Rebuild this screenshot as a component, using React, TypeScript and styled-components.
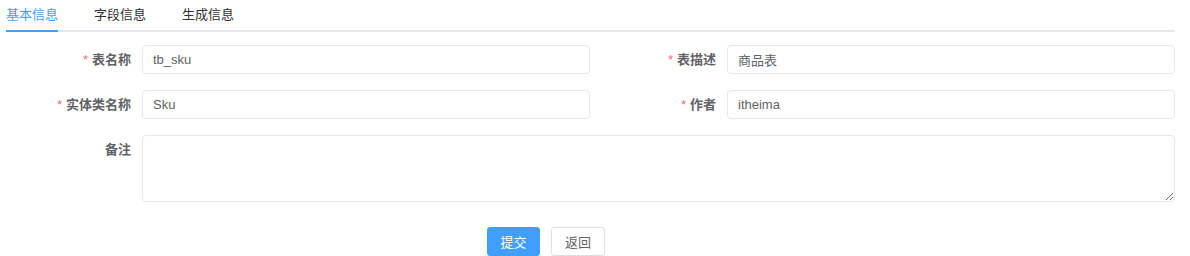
import React, { useState } from "react";
import styled, { createGlobalStyle } from "styled-components";

const GlobalStyle = createGlobalStyle`
  html, body {
    margin: 0;
    padding: 0;
    background: #fff;
  }
  body {
    font-family: "Helvetica Neue", "Liberation Sans", "Noto Sans CJK SC", sans-serif;
    color: #606266;
  }
`;

const Page = styled.div`
  width: 1190px;
  height: 256px;
  overflow: hidden;
  padding: 0 15px 0 6px;
  box-sizing: border-box;
`;

const TabNav = styled.div`
  display: flex;
  height: 32px;
  border-bottom: 2px solid #e4e7ed;
  box-sizing: border-box;
`;

const Tab = styled.div<{ $active?: boolean; $first?: boolean }>`
  position: relative;
  padding: ${(p) => (p.$first ? "0 18px 0 0" : "0 18px")};
  font-size: 13px;
  line-height: 30px;
  color: ${(p) => (p.$active ? "#409eff" : "#303133")};
  cursor: pointer;
  &::after {
    content: "";
    display: ${(p) => (p.$active ? "block" : "none")};
    position: absolute;
    left: ${(p) => (p.$first ? "0" : "18px")};
    right: 18px;
    bottom: -2px;
    height: 2px;
    background: #409eff;
  }
`;

const Form = styled.div`
  padding-top: 13px;
`;

const Grid = styled.div`
  display: grid;
  grid-template-columns: 1fr 1fr;
  column-gap: 1px;
`;

const Item = styled.div<{ $span?: number }>`
  display: flex;
  align-items: flex-start;
  margin-bottom: ${(p) => (p.$span === 2 ? "25px" : "16px")};
  grid-column: ${(p) => (p.$span === 2 ? "1 / span 2" : "auto")};
`;

const Label = styled.label`
  width: 125px;
  flex: none;
  padding-right: 11px;
  text-align: right;
  font-size: 13px;
  font-weight: bold;
  line-height: 29px;
  color: #606266;
`;

const Star = styled.span`
  color: #f56c6c;
  font-weight: normal;
  margin-right: 4px;
`;

const Input = styled.input`
  flex: 1;
  min-width: 0;
  height: 29px;
  box-sizing: border-box;
  border: 1px solid #e4e7ed;
  border-radius: 4px;
  padding: 0 10px;
  font-family: inherit;
  font-size: 13px;
  color: #606266;
  outline: none;
  background: #fff;
`;

const TextArea = styled.textarea`
  flex: 1;
  min-width: 0;
  height: 67px;
  box-sizing: border-box;
  border: 1px solid #e4e7ed;
  border-radius: 4px;
  padding: 5px 10px;
  font-family: inherit;
  font-size: 13px;
  color: #606266;
  outline: none;
  resize: vertical;
`;

const Footer = styled.div`
  display: flex;
  gap: 11px;
  padding-left: 481px;
`;

const Button = styled.button<{ $primary?: boolean }>`
  height: 29px;
  width: ${(p) => (p.$primary ? "53px" : "54px")};
  padding: 0;
  box-sizing: border-box;
  border-radius: 3px;
  border: 1px solid ${(p) => (p.$primary ? "#409eff" : "#dcdfe6")};
  background: ${(p) => (p.$primary ? "#409eff" : "#fff")};
  color: ${(p) => (p.$primary ? "#fff" : "#606266")};
  font-family: inherit;
  font-size: 13px;
  cursor: pointer;
`;

const tabs = ["基本信息", "字段信息", "生成信息"];

export default function App() {
  const [active, setActive] = useState(0);
  return (
    <>
      <GlobalStyle />
      <Page>
        <TabNav>
          {tabs.map((t, i) => (
            <Tab key={t} $active={active === i} $first={i === 0} onClick={() => setActive(i)}>
              {t}
            </Tab>
          ))}
        </TabNav>
        <Form>
          <Grid>
            <Item>
              <Label><Star>*</Star>表名称</Label>
              <Input defaultValue="tb_sku" />
            </Item>
            <Item>
              <Label><Star>*</Star>表描述</Label>
              <Input defaultValue="商品表" />
            </Item>
            <Item>
              <Label><Star>*</Star>实体类名称</Label>
              <Input defaultValue="Sku" />
            </Item>
            <Item>
              <Label><Star>*</Star>作者</Label>
              <Input defaultValue="itheima" />
            </Item>
            <Item $span={2}>
              <Label>备注</Label>
              <TextArea />
            </Item>
          </Grid>
          <Footer>
            <Button $primary>提交</Button>
            <Button>返回</Button>
          </Footer>
        </Form>
      </Page>
    </>
  );
}
